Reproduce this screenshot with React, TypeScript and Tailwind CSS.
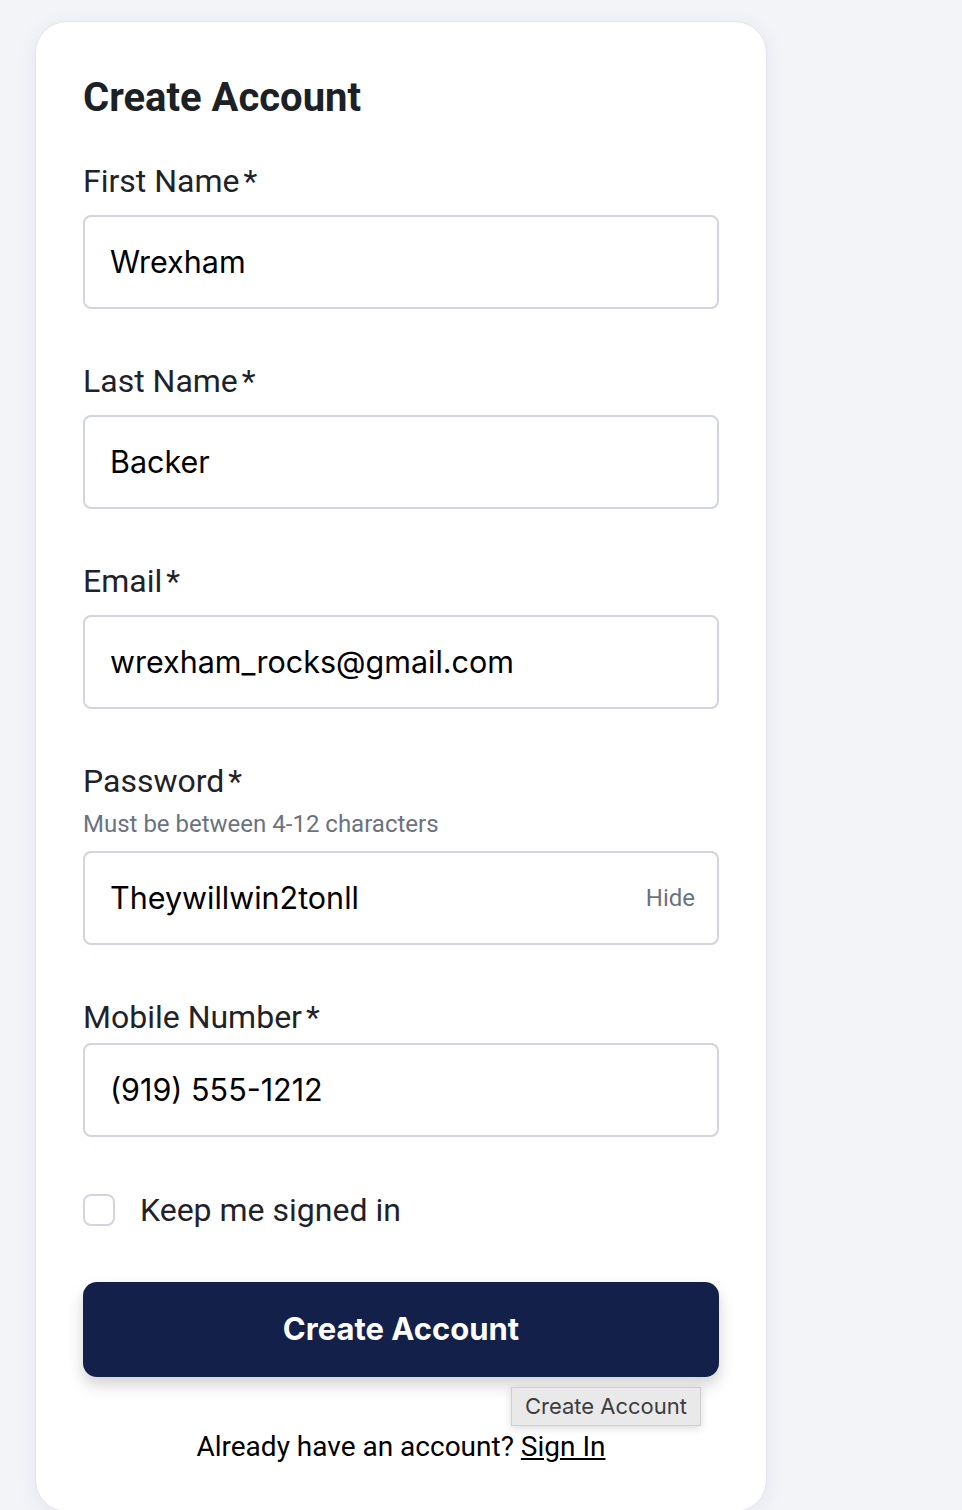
import React from "react";

const roboto = { fontFamily: "Roboto, 'Liberation Sans', sans-serif" };
const inter = { fontFamily: "Inter, 'Liberation Sans', sans-serif" };

function Label({ text, className = "" }: { text: string; className?: string }) {
  return (
    <div className={"text-[32px] leading-[36px] text-[#1f2328] " + className} style={roboto}>
      {text}
      <span className="ml-[4px]">*</span>
    </div>
  );
}

function Input({ value, className = "", right }: { value: string; className?: string; right?: string }) {
  return (
    <div
      className={
        "h-[94px] w-full rounded-[8px] border-2 border-[#d2d5de] bg-white flex items-center pl-[25px] pr-[22px] " +
        className
      }
    >
      <span className="flex-1 text-[30.5px] text-black" style={inter}>
        {value}
      </span>
      {right && (
        <span className="text-[24px] text-[#6b7280]" style={roboto}>
          {right}
        </span>
      )}
    </div>
  );
}

export default function App() {
  return (
    <div className="min-h-[1510px] w-full bg-[#f3f4f8] pt-[21px] pl-[35px]">
      <div className="box-border w-[732px] rounded-[32px] border border-[#e3e5ea] bg-white px-[47px] pt-[52px] pb-[48px] shadow-[0_4px_24px_rgba(30,40,80,0.06)]">
        <h1 className="text-[40px] leading-[48px] font-bold text-[#1c2126]" style={roboto}>
          Create Account
        </h1>

        <Label text="First Name" className="mt-[41px]" />
        <Input value="Wrexham" className="mt-[16px]" />

        <Label text="Last Name" className="mt-[54px]" />
        <Input value="Backer" className="mt-[16px]" />

        <Label text="Email" className="mt-[54px]" />
        <Input value="wrexham_rocks@gmail.com" className="mt-[16px]" />

        <Label text="Password" className="mt-[54px]" />
        <div className="mt-[11px] text-[24px] leading-[28px] text-[#6b7280]" style={roboto}>
          Must be between 4-12 characters
        </div>
        <Input value="Theywillwin2tonll" right="Hide" className="mt-[13px]" />

        <Label text="Mobile Number" className="mt-[54px]" />
        <Input value="(919) 555-1212" className="mt-[8px]" />

        <div className="mt-[55px] flex h-[36px] items-center gap-[25px]">
          <div className="h-[32px] w-[32px] rounded-[8px] border-2 border-[#d2d5de] bg-white" />
          <span className="text-[32px] leading-[36px] text-[#1f2328]" style={roboto}>
            Keep me signed in
          </span>
        </div>

        <div className="relative mt-[54px]">
          <button
            className="flex h-[95px] w-full items-center justify-center rounded-[14px] bg-[#13214a] text-[31px] font-bold text-white shadow-[0_8px_16px_rgba(0,0,0,0.18)]"
            style={inter}
          >
            Create Account
          </button>
          <div
            className="absolute right-[18px] top-[105px] z-10 flex h-[39px] items-center border border-[#cfcfcf] bg-[#e9e9e9] px-[13px] text-[22px] tracking-[0px] text-[#3d3d3d] shadow-[0_2px_8px_rgba(0,0,0,0.15)]"
            style={inter}
          >
            Create Account
          </div>
        </div>

        <div className="mt-[54px] text-center text-[28px] leading-[32px] text-black" style={roboto}>
          Already have an account? <span className="underline">Sign In</span>
        </div>
      </div>
    </div>
  );
}
